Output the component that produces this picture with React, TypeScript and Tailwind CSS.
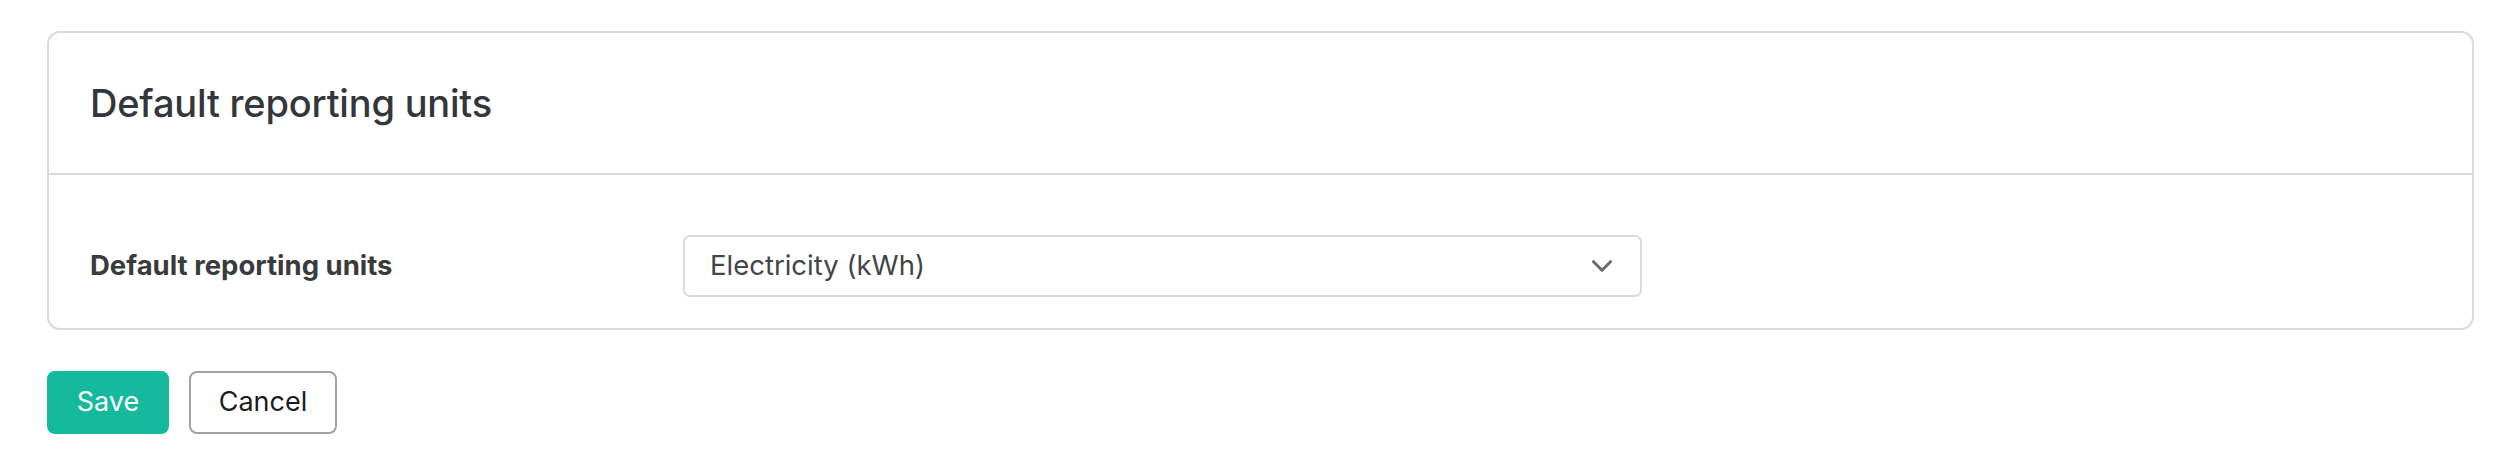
import { ChevronDown } from "lucide-react";

export default function App() {
  return (
    <div className="min-h-screen bg-white pl-[47px] pr-[40px] pt-[31px] font-['Inter',_'Liberation_Sans',_sans-serif]">
      <section className="rounded-[13px] border-2 border-[#d9d9de] bg-white">
        <header className="flex h-[142px] items-center border-b-2 border-[#d9d9de] px-[41px]">
          <h2 className="text-[38px] font-medium tracking-[-0.2px] text-[#33363a]">Default reporting units</h2>
        </header>

        <div className="px-[41px] pt-[60px] pb-[31px]">
          <div className="flex items-center">
            <label htmlFor="units" className="w-[593px] text-[27.5px] font-bold text-[#3a3b3d]">
              Default reporting units
            </label>
            <button
              id="units"
              type="button"
              className="flex h-[62px] w-[959px] items-center justify-between rounded-[7px] border-2 border-[#d9d9de] bg-white pl-[25px] pr-[21px] text-[27.5px] text-[#444548]"
            >
              <span>Electricity (kWh)</span>
              <ChevronDown className="h-[34px] w-[34px] text-[#6c6d72]" strokeWidth={2.2} />
            </button>
          </div>
        </div>
      </section>

      <div className="mt-[41px] flex gap-[20px]">
        <button type="button" className="h-[63px] w-[122px] rounded-[8px] bg-[#15b99b] text-[27px] text-white">
          Save
        </button>
        <button
          type="button"
          className="h-[63px] w-[148px] rounded-[8px] border-2 border-[#9ea1a8] bg-white text-[27px] text-[#1c1c1e]"
        >
          Cancel
        </button>
      </div>
    </div>
  );
}
